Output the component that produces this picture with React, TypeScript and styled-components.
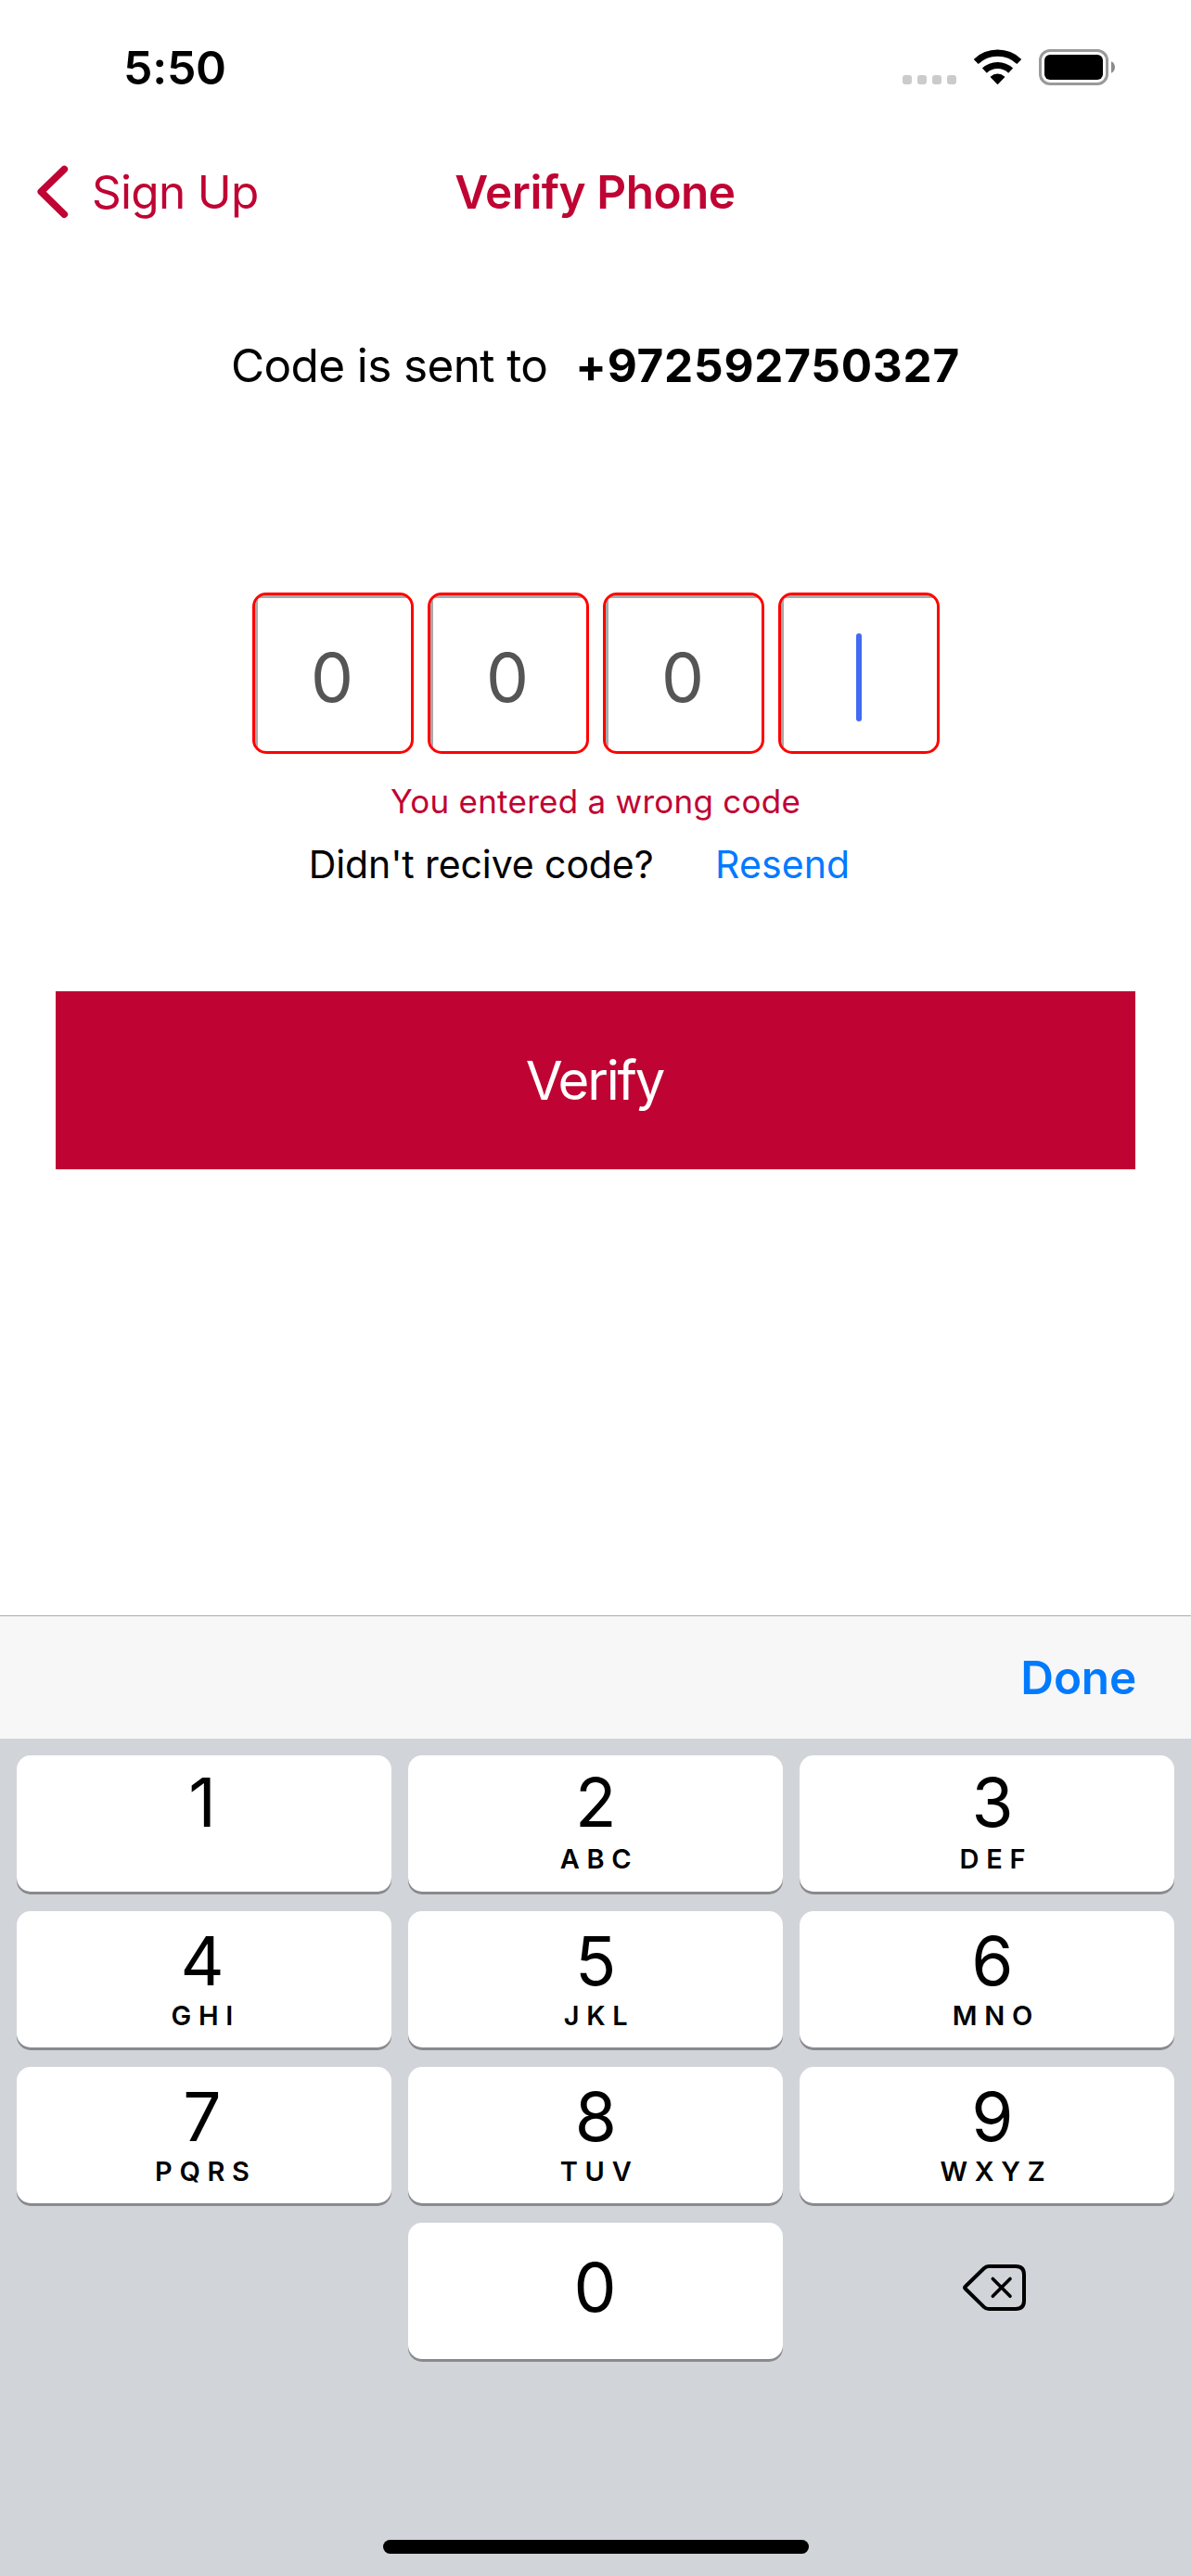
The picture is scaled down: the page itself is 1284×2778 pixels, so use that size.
import React from "react";
import styled, { createGlobalStyle } from "styled-components";

const crimson = "#bf0433";
const blue = "#007aff";

const GlobalStyle = createGlobalStyle`
  *, *::before, *::after { box-sizing: border-box; }
  body {
    margin: 0;
    background: #fff;
    color: #000;
    font-family: Inter, "Liberation Sans", sans-serif;
  }
  button {
    border: 0;
    padding: 0;
    margin: 0;
    background: none;
    font: inherit;
    color: inherit;
  }
  svg { display: block; flex: none; }
`;

const Screen = styled.div`
  width: 1284px;
  height: 2778px;
  display: flex;
  flex-direction: column;
  background: #fff;
  overflow: hidden;
`;

const StatusBar = styled.header`
  height: 141px;
  padding: 5px 82px 0 133px;
  display: flex;
  align-items: center;
  justify-content: space-between;
`;

const Clock = styled.time`
  font-size: 50px;
  line-height: 60px;
  font-weight: 600;
  letter-spacing: -0.25px;
`;

const StatusIcons = styled.div`
  display: flex;
  align-items: center;
  gap: 19px;
`;

const NavBar = styled.nav`
  height: 132px;
  padding: 0 36px 0 35px;
  display: grid;
  grid-template-columns: 1fr auto 1fr;
  align-items: center;
  color: ${crimson};
  font-size: 49.5px;
  line-height: 60px;
`;

const BackButton = styled.button`
  display: flex;
  align-items: center;
  gap: 24px;
  letter-spacing: -0.7px;
`;

const NavTitle = styled.h1`
  margin: 0;
  font-size: inherit;
  font-weight: 600;
  letter-spacing: -0.5px;
`;

const Main = styled.main`
  flex: 1;
  display: flex;
  flex-direction: column;
`;

const SentTo = styled.p`
  margin: 91px 0 0;
  display: flex;
  justify-content: center;
  gap: 30px;
  font-size: 49.5px;
  line-height: 60px;
  letter-spacing: -0.63px;
`;

const PhoneNumber = styled.strong`
  font-weight: 700;
  letter-spacing: 0.75px;
`;

const CodeFields = styled.div`
  margin-top: 215px;
  display: flex;
  justify-content: center;
  gap: 15px;
`;

const CodeField = styled.div`
  width: 174px;
  height: 174px;
  padding: 9px 1px 0 0;
  display: flex;
  align-items: center;
  justify-content: center;
  border: 3px solid #ff0000;
  border-radius: 15px;
  background:
    linear-gradient(#a9a9a9, #a9a9a9) top / 100% 3px no-repeat padding-box,
    linear-gradient(#a9a9a9, #a9a9a9) left / 3px 100% no-repeat padding-box;
  color: #555;
  font-size: 73px;
  line-height: 88px;
`;

const Caret = styled.span`
  width: 6px;
  height: 95px;
  margin-left: 1px;
  border-radius: 3px;
  background: #426bf2;
`;

const ErrorText = styled.p`
  margin: 30px 0 0;
  text-align: center;
  color: ${crimson};
  font-size: 35px;
  line-height: 42px;
  letter-spacing: 0.26px;
`;

const ResendRow = styled.div`
  margin-top: 22px;
  padding-left: 332.7px;
  display: flex;
  gap: 66.5px;
  font-size: 41px;
  line-height: 50px;
  letter-spacing: -0.1px;
`;

const ResendButton = styled.button`
  color: ${blue};
  letter-spacing: 0.1px;
`;

const VerifyButton = styled.button`
  height: 192px;
  margin: 112px 60px 0;
  padding-right: 2px;
  background: ${crimson};
  color: #fff;
  font-size: 58px;
  line-height: 70px;
  letter-spacing: -2.2px;
`;

const InputToolbar = styled.div`
  height: 133px;
  padding-right: 59px;
  display: flex;
  align-items: center;
  justify-content: flex-end;
  border-top: 1px solid #acacac;
  background: #f7f7f7;
`;

const DoneButton = styled.button`
  color: ${blue};
  font-size: 49.5px;
  line-height: 60px;
  font-weight: 600;
  letter-spacing: -0.2px;
`;

const Keyboard = styled.section`
  height: 903px;
  padding: 18px 18px 24px;
  display: flex;
  flex-direction: column;
  justify-content: space-between;
  background: #d1d4d9;
`;

const Keys = styled.div`
  display: grid;
  grid-template-columns: repeat(3, 404px);
  grid-auto-rows: 147px;
  gap: 21px 18px;
`;

const Key = styled.button<{ $top: number; $gap: number; $shift: number }>`
  padding-top: ${(p) => p.$top}px;
  padding-left: ${(p) => Math.max(p.$shift, 0) * 2}px;
  padding-right: ${(p) => Math.max(-p.$shift, 0) * 2}px;
  display: flex;
  flex-direction: column;
  align-items: center;
  gap: ${(p) => p.$gap}px;
  border-radius: 15px;
  background: #fff;
  box-shadow: 0 3px 0 #898a8d;
`;

const Digit = styled.span`
  font-size: 73px;
  line-height: 73px;
`;

const Letters = styled.span`
  padding-left: 7.7px;
  font-size: 29px;
  line-height: 29px;
  font-weight: 600;
  letter-spacing: 7.7px;
`;

const DeleteKey = styled.button`
  grid-column: 3;
  display: flex;
  align-items: center;
  justify-content: center;
  padding: 0 0 7px 16px;
`;

const ZeroKey = styled(Key)`
  grid-column: 2;
`;

const HomeIndicator = styled.div`
  width: 459px;
  height: 15px;
  align-self: center;
  border-radius: 8px;
  background: #000;
`;

const letters = ["", "ABC", "DEF", "GHI", "JKL", "MNO", "PQRS", "TUV", "WXYZ"];
const columnShift = [-2, 0.25, 6];
const code = ["0", "0", "0", ""];

function SignalIcon() {
  return (
    <svg width="58" height="40" viewBox="0 0 58 40" fill="#cbcbcb">
      {[0, 16, 32, 48].map((x) => (
        <rect key={x} x={x} y="28" width="10" height="10" rx="3" />
      ))}
    </svg>
  );
}

function WifiIcon() {
  return (
    <svg width="51" height="40" viewBox="0 0 51 40">
      <g fill="none" stroke="#000" strokeWidth="7.2">
        <path d="M2.2 13.5A33.8 33.8 0 0 1 48.8 13.5" />
        <path d="M11.4 23.1A20.5 20.5 0 0 1 39.6 23.1" />
      </g>
      <path
        d="M25.5 37.3L18.5 30.1A10.2 10.2 0 0 1 32.5 30.1Z"
        stroke="#000"
        strokeWidth="1.4"
        strokeLinejoin="round"
      />
    </svg>
  );
}

function BatteryIcon() {
  return (
    <svg width="82" height="40" viewBox="0 0 82 40">
      <rect x="1.5" y="1.5" width="72" height="36" rx="10.5" fill="none" stroke="#9a9a9a" strokeWidth="3" />
      <rect x="6" y="6" width="63" height="27" rx="6" />
      <path d="M78 13.3C80.6 14.3 82 16.7 82 19.5S80.6 24.7 78 25.7Z" fill="#8c8c8c" />
    </svg>
  );
}

function ChevronIcon() {
  return (
    <svg width="40" height="60" viewBox="0 0 40 60" fill="none">
      <path
        d="M34.3 5.5L9.3 29.8L34.3 54.2"
        stroke={crimson}
        strokeWidth="7.6"
        strokeLinecap="round"
        strokeLinejoin="round"
      />
    </svg>
  );
}

function DeleteIcon() {
  return (
    <svg width="68" height="50" viewBox="0 0 68 50" fill="none" stroke="#000" strokeLinecap="round" strokeLinejoin="round">
      <path
        d="M28 2H57C63 2 66 5 66 11V39C66 45 63 48 57 48H28C25.5 48 24.3 47.3 22.8 45.8L2.8 26.3C1.7 25.3 1.7 24.7 2.8 23.7L22.8 4.2C24.3 2.7 25.5 2 28 2Z"
        strokeWidth="4"
      />
      <path d="M32.3 15.5L51 34.3M51 15.5L32.3 34.3" strokeWidth="3.6" />
    </svg>
  );
}

export default function App() {
  return (
    <>
      <GlobalStyle />
      <Screen>
        <StatusBar>
          <Clock>5:50</Clock>
          <StatusIcons>
            <SignalIcon />
            <WifiIcon />
            <BatteryIcon />
          </StatusIcons>
        </StatusBar>
        <NavBar>
          <BackButton>
            <ChevronIcon />
            Sign Up
          </BackButton>
          <NavTitle>Verify Phone</NavTitle>
        </NavBar>
        <Main>
          <SentTo>
            <span>Code is sent to</span>
            <PhoneNumber>+972592750327</PhoneNumber>
          </SentTo>
          <CodeFields>
            {code.map((digit, i) => (
              <CodeField key={i}>{digit || <Caret />}</CodeField>
            ))}
          </CodeFields>
          <ErrorText>You entered a wrong code</ErrorText>
          <ResendRow>
            <span>Didn't recive code?</span>
            <ResendButton>Resend</ResendButton>
          </ResendRow>
          <VerifyButton>Verify</VerifyButton>
        </Main>
        <InputToolbar>
          <DoneButton>Done</DoneButton>
        </InputToolbar>
        <Keyboard>
          <Keys>
            {letters.map((text, i) => (
              <Key key={i} $top={i < 3 ? 14 : 17} $gap={i < 3 ? 10 : 8} $shift={columnShift[i % 3]}>
                <Digit>{i + 1}</Digit>
                {text && <Letters>{text}</Letters>}
              </Key>
            ))}
            <ZeroKey $top={33} $gap={0} $shift={-0.5}>
              <Digit>0</Digit>
            </ZeroKey>
            <DeleteKey aria-label="Delete">
              <DeleteIcon />
            </DeleteKey>
          </Keys>
          <HomeIndicator />
        </Keyboard>
      </Screen>
    </>
  );
}
